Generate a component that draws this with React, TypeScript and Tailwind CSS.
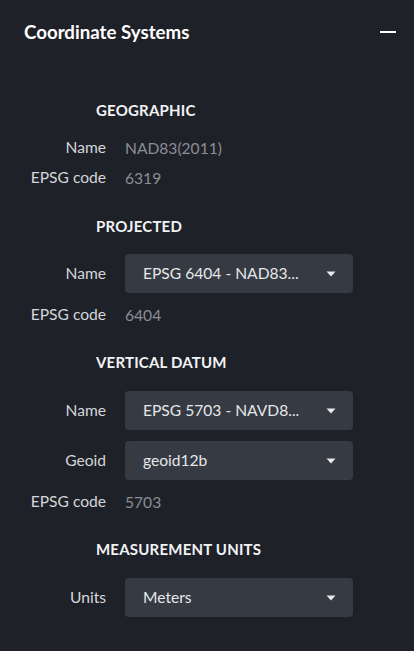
import React from 'react';

const font = { fontFamily: 'Lato, "Noto Sans", sans-serif' };

function Caret() {
  return (
    <svg width="10" height="6" viewBox="0 0 10 6" className="shrink-0">
      <path d="M0.5 0.5 H9.5 L5 5.5 Z" fill="#e8e9eb" />
    </svg>
  );
}

function Select({ value }: { value: string }) {
  return (
    <div className="flex h-[39px] w-[228px] items-center justify-between rounded-[4px] bg-[#353a43] pl-[18px] pr-[17px]">
      <span className="text-[15.6px] text-[#e6e7e9]">{value}</span>
      <Caret />
    </div>
  );
}

function Row({ label, children }: { label: string; children: React.ReactNode }) {
  return (
    <div className="flex items-center">
      <div className="w-[106px] shrink-0 text-right text-[15.6px] text-[#d4d6d9]">{label}</div>
      <div className="ml-[19px]">{children}</div>
    </div>
  );
}

function TextRow({ label, value }: { label: string; value: string }) {
  return (
    <div className="h-[30px]">
      <Row label={label}>
        <span className="text-[15.6px] leading-[30px] text-[#8b8e94]">{value}</span>
      </Row>
    </div>
  );
}

function Heading({ children }: { children: React.ReactNode }) {
  return (
    <h3 className="pl-[96px] text-[15px] font-bold leading-[20px] tracking-[0.2px] text-[#f2f3f4]">
      {children}
    </h3>
  );
}

export default function App() {
  return (
    <div className="min-h-screen w-[414px] bg-[#1f2129]" style={font}>
      <header className="flex h-16 items-center justify-between pl-6 pr-[18px]">
        <h2 className="text-[18.7px] font-bold text-white">Coordinate Systems</h2>
        <div className="h-[2px] w-4 bg-white" />
      </header>

      <section className="mt-9">
        <Heading>GEOGRAPHIC</Heading>
        <div className="mt-[13px]">
          <TextRow label="Name" value="NAD83(2011)" />
          <TextRow label="EPSG code" value="6319" />
        </div>
      </section>

      <section className="mt-[23px]">
        <Heading>PROJECTED</Heading>
        <div className="mt-[18px]">
          <Row label="Name">
            <Select value="EPSG 6404 - NAD83..." />
          </Row>
        </div>
        <div className="mt-[7px]">
          <TextRow label="EPSG code" value="6404" />
        </div>
      </section>

      <section className="mt-[22px]">
        <Heading>VERTICAL DATUM</Heading>
        <div className="mt-[19px] flex flex-col gap-[11px]">
          <Row label="Name">
            <Select value="EPSG 5703 - NAVD8..." />
          </Row>
          <Row label="Geoid">
            <Select value="geoid12b" />
          </Row>
        </div>
        <div className="mt-[7px]">
          <TextRow label="EPSG code" value="5703" />
        </div>
      </section>

      <section className="mt-[22px] pb-8">
        <Heading>MEASUREMENT UNITS</Heading>
        <div className="mt-[19px]">
          <Row label="Units">
            <Select value="Meters" />
          </Row>
        </div>
      </section>
    </div>
  );
}
